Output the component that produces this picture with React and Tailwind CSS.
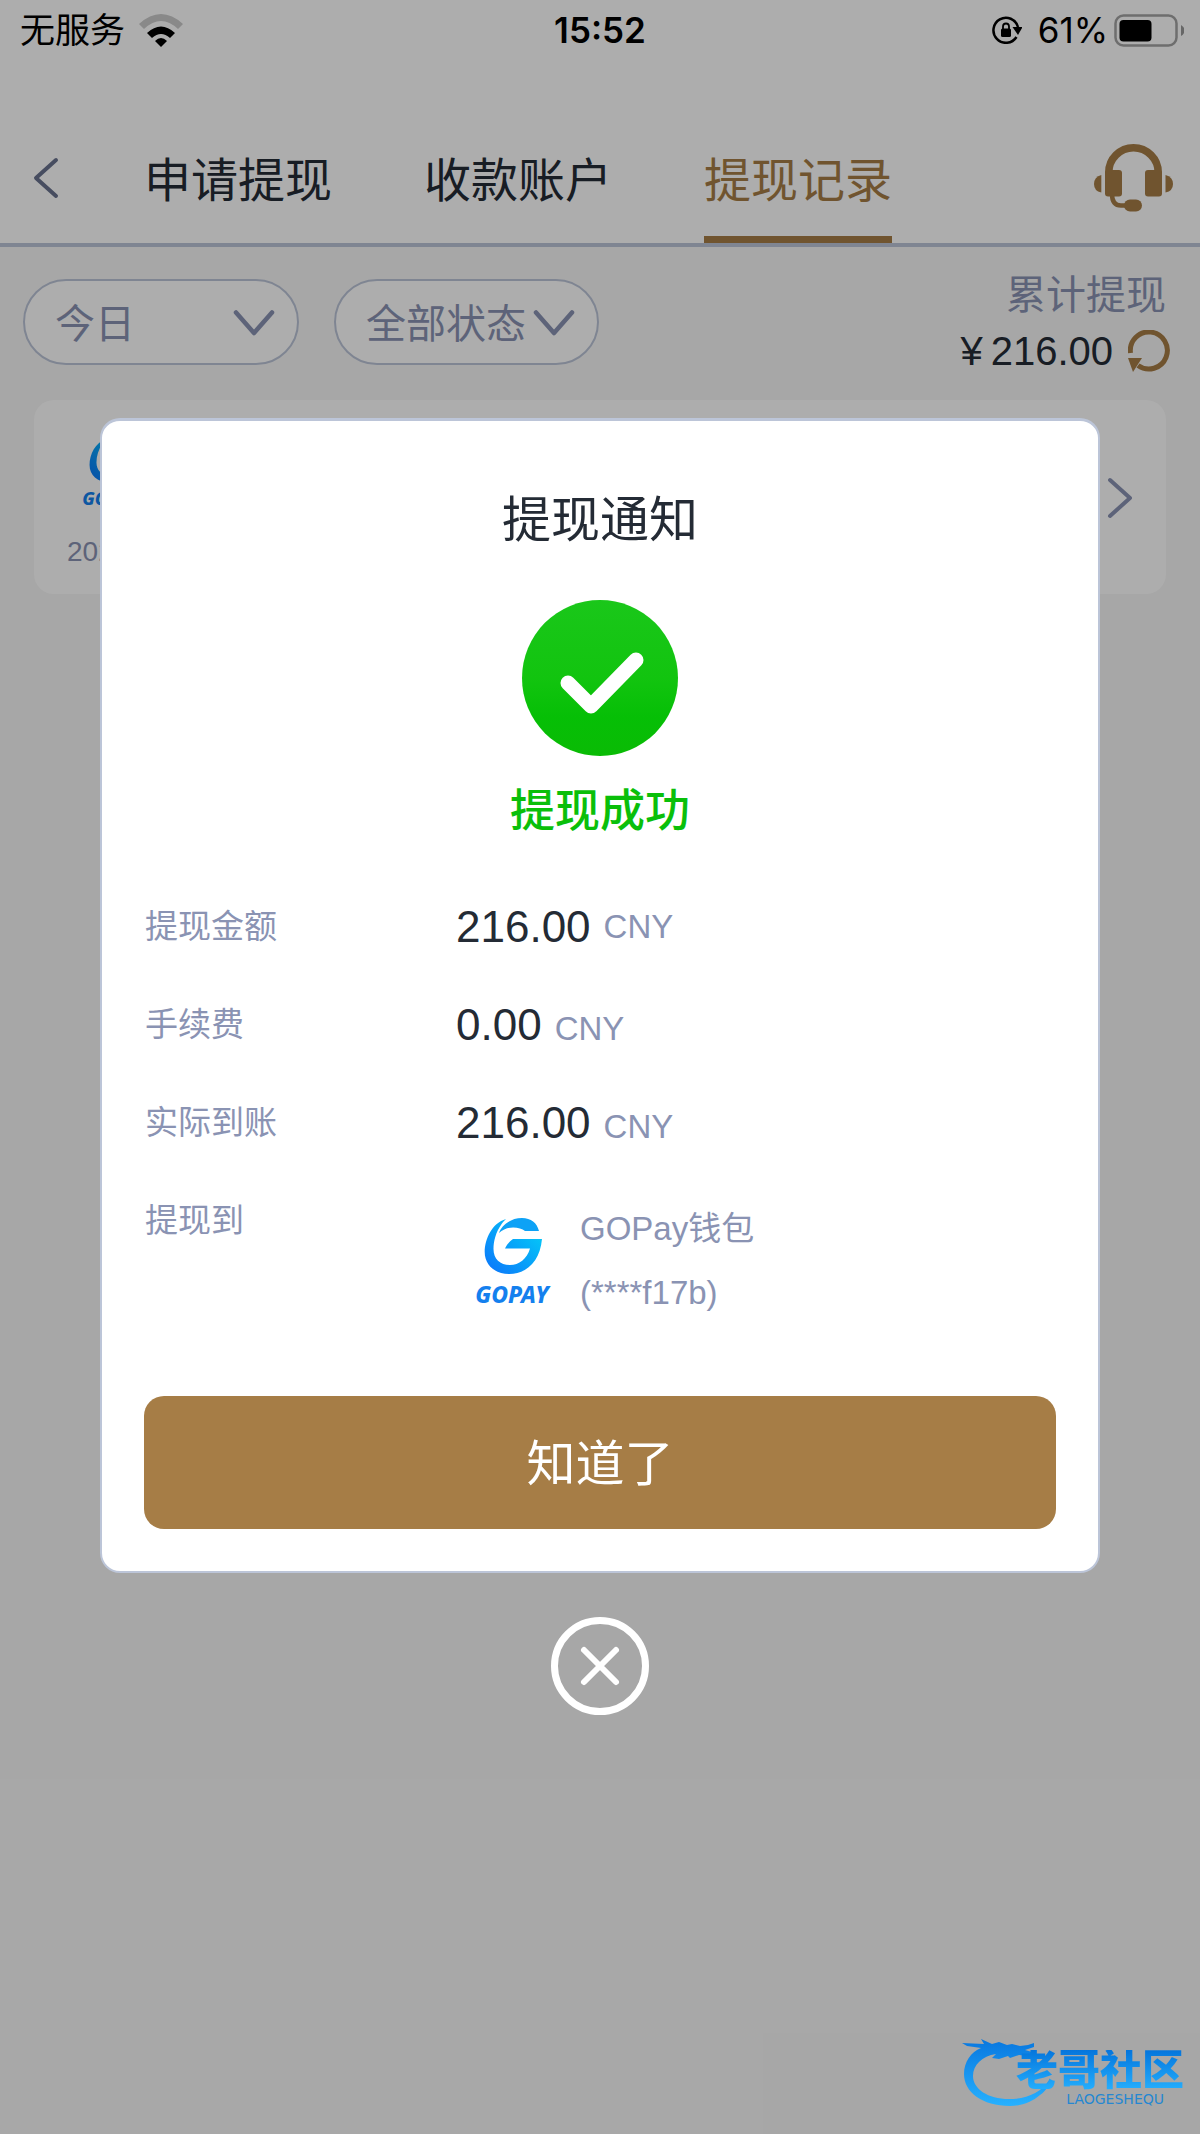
import React, { useId, useState } from "react";

const tabs = ["申请提现", "收款账户", "提现记录"];

const amounts = [
  { label: "提现金额", value: "216.00", align: "items-center" },
  { label: "手续费", value: "0.00", align: "items-baseline" },
  { label: "实际到账", value: "216.00", align: "items-baseline" },
];

function GoPayLogo({ className }) {
  const id = useId();

  return (
    <svg viewBox="0 0 112 112" className={className} role="img" aria-label="GOPAY">
      <defs>
        <linearGradient id={id} x1="0" y1="1" x2="1" y2="0">
          <stop offset="0.1" stopColor="#0b7cfa" />
          <stop offset="0.8" stopColor="#05c2f8" />
        </linearGradient>
      </defs>
      <rect width="112" height="112" rx="16" fill="#fff" />
      <path
        fill={`url(#${id})`}
        d="M50 14C36 18 28.700 34 28.700 47C28.700 60 39 69 53 69C71 69 84 56 86 34L57 34C54 36 51 39 49 43.500L74 43.500C71 54 63 60 54 60C44 60 37.500 54 37.500 44C37.500 36 40 27 45 20C46 18 48 16 50 14Z"
      />
      <path fill="#0da2f6" d="M43 28C45 21 54 13 66 13C75 13 81 18 83 26L69 26C64 22 51 20 43 28Z" />
      <text
        x="56"
        y="98"
        textAnchor="middle"
        fill="#1480ee"
        className="font-['Noto_Sans',sans-serif] text-[23px] font-extrabold italic"
      >
        GOPAY
      </text>
    </svg>
  );
}

function StatusBar() {
  return (
    <div className="grid h-[60px] grid-cols-3 items-center px-4 font-['Inter','Noto_Sans_CJK_SC',sans-serif] text-[35px] leading-none text-black">
      <div className="flex items-center gap-[14px] pl-1">
        <span>无服务</span>
        <svg viewBox="0 0 44 33" className="h-[33px] w-11">
          <path d="M0 10Q22 -10 44 10L39 15Q22 -1 5 15Z" fill="#cacaca" />
          <path d="M8 19Q22 6 36 19L31 24Q22 16 13 24Z" />
          <path d="M16 27Q22 21 28 27L22 33Z" />
        </svg>
      </div>
      <span className="text-center font-semibold">15:52</span>
      <div className="flex items-center justify-end">
        <svg viewBox="0 0 30 28" className="mr-4 h-7 w-[30px]" fill="none" stroke="#000" strokeWidth="2.500">
          <path d="M24.500 21A12.500 12.500 0 1 1 26 11" />
          <path d="M20.500 11L30.500 11L26 19Z" fill="#000" stroke="none" />
          <rect x="9" y="12.500" width="10" height="8.500" rx="1.500" fill="#000" stroke="none" />
          <path d="M11 13V10.500A3 3 0 0 1 17 10.500V13" strokeWidth="1.800" />
        </svg>
        <span className="mr-[6px]">61%</span>
        <svg viewBox="0 0 70 33" className="h-[33px] w-[70px]">
          <rect x="1.500" y="1.500" width="61" height="30" rx="8" fill="none" stroke="#a3a3a3" strokeWidth="2.500" />
          <rect x="5.500" y="6" width="32" height="21.500" rx="4" />
          <path d="M67 11Q70.500 13 70.500 16.500Q70.500 20 67 22Z" fill="#999" />
        </svg>
      </div>
    </div>
  );
}

function Filter({ label, value, className }) {
  return (
    <label className={`relative block ${className}`}>
      <select
        aria-label={label}
        className="h-[86px] w-full appearance-none rounded-full border-2 border-[#bcc5d8] bg-white pt-[3px] pl-[30px] text-[40px] text-[#8a93b3]"
      >
        <option>{value}</option>
      </select>
      <svg
        viewBox="0 0 42 26"
        className="pointer-events-none absolute top-[31px] right-6 h-[26px] w-[42px]"
        fill="none"
        stroke="#8a93b3"
        strokeWidth="4.500"
        strokeLinecap="round"
        strokeLinejoin="round"
      >
        <path d="M3 2.500L21 23L39 2.500" />
      </svg>
    </label>
  );
}

function Header() {
  const [active, setActive] = useState(2);

  return (
    <header className="flex items-center border-b-4 border-[#bcc5d8] bg-white pt-[61px] pr-[27px] pl-[33px]">
      <button aria-label="返回" className="mb-2">
        <svg viewBox="0 0 26 42" className="h-[42px] w-[26px]" fill="none" stroke="#69728e" strokeWidth="4" strokeLinecap="round" strokeLinejoin="round">
          <path d="M23 3L3 21L23 39" />
        </svg>
      </button>
      <nav className="ml-[85px] flex gap-[92px]">
        {tabs.map((tab, index) => (
          <button
            key={tab}
            onClick={() => setActive(index)}
            className={`h-[122px] border-b-[7px] pt-[3px] text-[47px] leading-none ${
              index === active ? "border-[#a67d46] text-[#a67d46]" : "border-transparent text-[#242b35]"
            }`}
          >
            {tab}
          </button>
        ))}
      </nav>
      <button aria-label="客服" className="mb-2 ml-auto">
        <svg viewBox="0 0 79 68" className="h-[68px] w-[79px]" fill="#a67d46">
          <path d="M14.750 34V28.500A24.750 24.750 0 0 1 64.250 28.500V34" fill="none" stroke="#a67d46" strokeWidth="7.500" />
          <rect x="11" y="26" width="17" height="26.500" rx="3" />
          <rect x="51" y="26" width="17" height="26.500" rx="3" />
          <path d="M7.300 31V48.500Q0 47 0 40Q0 33 7.300 31Z" />
          <path d="M71.500 31V48.500Q79 47 79 40Q79 33 71.500 31Z" />
          <path d="M18 50Q18 61.500 27 61.500H34" fill="none" stroke="#a67d46" strokeWidth="4.500" />
          <rect x="30" y="55.500" width="18" height="12" rx="6" />
        </svg>
      </button>
    </header>
  );
}

function NoticeDialog() {
  return (
    <div className="absolute inset-0 flex flex-col items-center bg-black/[0.32] px-[100px] pt-[418px]">
      <section
        role="dialog"
        aria-labelledby="notice-title"
        className="w-full rounded-[20px] border-2 border-t-[3px] border-[#bcc5d8] bg-white px-[42px] pt-[67px] pb-[42px]"
      >
        <h2 id="notice-title" className="text-center text-[49px] leading-[64px] text-[#242b35]">
          提现通知
        </h2>
        <svg viewBox="0 0 156 156" className="mx-auto mt-12 h-[156px] w-[156px]">
          <defs>
            <linearGradient id="success" x1="0" y1="0" x2="0" y2="1">
              <stop offset="0" stopColor="#1ac71a" />
              <stop offset="0.5" stopColor="#12c40f" />
              <stop offset="0.75" stopColor="#06bf06" />
              <stop offset="1" stopColor="#0abb05" />
            </linearGradient>
          </defs>
          <circle cx="78" cy="78" r="78" fill="url(#success)" />
          <path d="M46 83L69 106L114 60" fill="none" stroke="#fff" strokeWidth="15" strokeLinecap="round" strokeLinejoin="round" />
        </svg>
        <p className="mt-7 text-center text-[45px] leading-[56px] font-medium text-[#0abf0a]">提现成功</p>

        <dl className="mt-[38px] text-[33px] text-[#8a93b3]">
          {amounts.map(({ label, value, align }) => (
            <div key={label} className="flex h-[98px] items-center">
              <dt className="w-[312px] pl-px">{label}</dt>
              <dd className={`flex gap-[13px] ${align}`}>
                <span className="text-[44px] text-[#242b35]">{value}</span>
                <span>CNY</span>
              </dd>
            </div>
          ))}
          <div className="flex">
            <dt className="w-[312px] pl-px leading-[98px]">提现到</dt>
            <dd className="flex items-center gap-3 pt-[33px] leading-[64px]">
              <GoPayLogo className="h-28 w-28" />
              <span className="-my-2">
                GOPay钱包
                <br />
                (****f17b)
              </span>
            </dd>
          </div>
        </dl>

        <button className="mt-[79px] h-[133px] w-full rounded-[20px] bg-[#a67d46] pt-1 text-[49px] text-white">
          知道了
        </button>
      </section>

      <button aria-label="关闭" className="mt-11">
        <svg viewBox="0 0 98 98" className="h-[98px] w-[98px]" fill="none" stroke="#fff" strokeLinecap="round">
          <circle cx="49" cy="49" r="45.500" strokeWidth="7" />
          <path d="M33 33L65 65M65 33L33 65" strokeWidth="6" />
        </svg>
      </button>
    </div>
  );
}

function Watermark() {
  return (
    <div className="absolute right-4 bottom-7 flex h-[68px] w-[222px] flex-col items-end justify-end">
      <svg viewBox="0 0 90 68" className="absolute top-0 left-0 h-[68px] w-[90px]">
        <defs>
          <linearGradient id="dragon" x1="0" y1="0" x2="0" y2="1">
            <stop offset="0" stopColor="#0877df" />
            <stop offset="1" stopColor="#27b1ff" />
          </linearGradient>
        </defs>
        <path
          fill="url(#dragon)"
          d="M0 5L22 6L19 1L30 6L37 4L45 7L50 6L58 8L66 7L72 5L72 9L63 12L70 14L68 18L57 17L48 20L46 18L37 21L30 20L34 16C20 18 11 27 11 38C11 51 26 61 47 61C64 61 79 55 87 42C87 48 84 53 78 57C70 64 60 68 48 68C20 68 2 54 2 36C2 24 9 14 19 10L5 8Z"
        />
      </svg>
      <p className="z-10 bg-gradient-to-b from-[#0575dc] to-[#27b1ff] bg-clip-text text-[42px] leading-[42px] font-black text-transparent">
        老哥社区
      </p>
      <p className="z-10 mr-5 font-['DejaVu_Sans',sans-serif] text-[14px] leading-[14px] text-[#2587d2]">LAOGESHEQU</p>
    </div>
  );
}

function App() {
  return (
    <div className="relative min-h-screen bg-[#f7f7f7] font-['Liberation_Sans','Noto_Sans_CJK_SC',sans-serif]">
      <div className="bg-white">
        <StatusBar />
      </div>
      <Header />

      <main>
        <div className="flex items-start pt-5 pr-[30px] pl-[23px]">
          <Filter label="日期" value="今日" className="mt-3 w-[276px]" />
          <Filter label="状态" value="全部状态" className="mt-3 ml-[35px] w-[265px]" />
          <div className="ml-auto text-right text-[40px] leading-[56px]">
            <p className="pr-1 text-[#8a93b3]">累计提现</p>
            <div className="flex items-center justify-end gap-[15px] text-[#242b35]">
              <span className="flex gap-2">
                <span>¥</span>
                <span>216.00</span>
              </span>
              <button aria-label="刷新">
                <svg viewBox="0 0 42 42" className="h-[42px] w-[42px]" fill="none" stroke="#a67d46" strokeWidth="5">
                  <path d="M2.500 23A18.500 18.500 0 1 1 10 35.500" />
                  <path d="M0 28H14L5 42Z" fill="#a67d46" stroke="none" />
                </svg>
              </button>
            </div>
          </div>
        </div>

        <a href="#record" className="mx-[34px] mt-[21px] flex items-center justify-between rounded-[20px] bg-white px-[33px] pt-7 pb-[26px]">
          <div>
            <GoPayLogo className="h-[88px] w-[88px]" />
            <p className="mt-5 text-[28px] leading-[32px] text-[#8a93b3]">202</p>
          </div>
          <svg viewBox="0 0 26 42" className="h-[42px] w-[26px]" fill="none" stroke="#8a93b3" strokeWidth="4" strokeLinecap="round" strokeLinejoin="round">
            <path d="M3 3L23 21L3 39" />
          </svg>
        </a>
      </main>

      <NoticeDialog />
      <Watermark />
    </div>
  );
}

export default App;
